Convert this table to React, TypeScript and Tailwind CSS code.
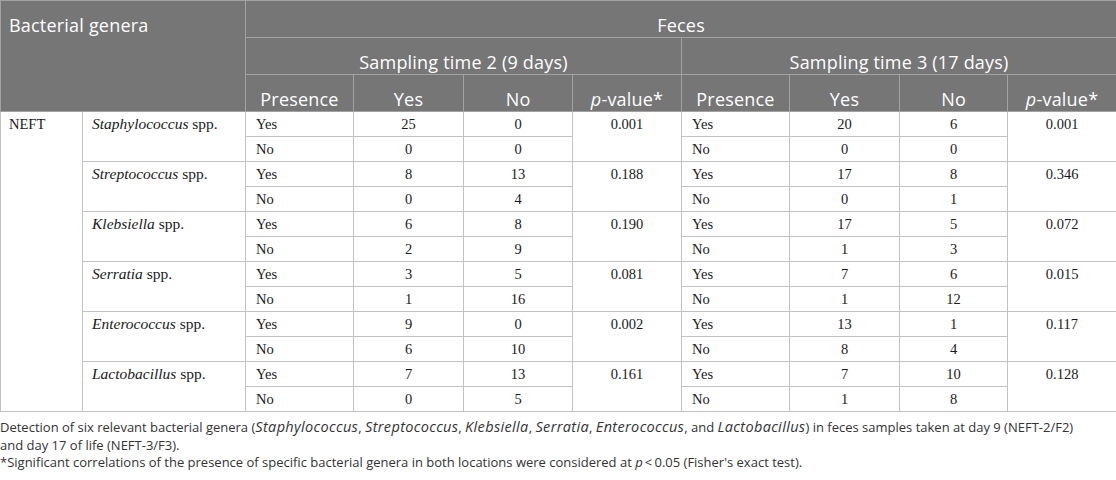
import React from "react";

type Row = { yes1: string; no1: string; yes2: string; no2: string };
type Genus = { name: string; p1: string; p2: string; rows: [Row, Row] };

const genera: Genus[] = [
  { name: "Staphylococcus", p1: "0.001", p2: "0.001", rows: [{ yes1: "25", no1: "0", yes2: "20", no2: "6" }, { yes1: "0", no1: "0", yes2: "0", no2: "0" }] },
  { name: "Streptococcus", p1: "0.188", p2: "0.346", rows: [{ yes1: "8", no1: "13", yes2: "17", no2: "8" }, { yes1: "0", no1: "4", yes2: "0", no2: "1" }] },
  { name: "Klebsiella", p1: "0.190", p2: "0.072", rows: [{ yes1: "6", no1: "8", yes2: "17", no2: "5" }, { yes1: "2", no1: "9", yes2: "1", no2: "3" }] },
  { name: "Serratia", p1: "0.081", p2: "0.015", rows: [{ yes1: "3", no1: "5", yes2: "7", no2: "6" }, { yes1: "1", no1: "16", yes2: "1", no2: "12" }] },
  { name: "Enterococcus", p1: "0.002", p2: "0.117", rows: [{ yes1: "9", no1: "0", yes2: "13", no2: "1" }, { yes1: "6", no1: "10", yes2: "8", no2: "4" }] },
  { name: "Lactobacillus", p1: "0.161", p2: "0.128", rows: [{ yes1: "7", no1: "13", yes2: "7", no2: "10" }, { yes1: "0", no1: "5", yes2: "1", no2: "8" }] },
];

const widths = [82, 163, 108, 110, 109, 109, 108, 110, 108, 109];

const th = "border border-[#a2a2a2] bg-[#767676] text-white font-normal align-top pt-[12px] h-[37px] leading-[24px]";
const td = "border border-[#c2c2c2] h-[25px] leading-[20px] align-middle";
const em = "italic text-[14.5px] tracking-[0.35px]";

export default function App() {
  return (
    <div className="w-[1116px] bg-white">
      <table
        className="w-[1116px] table-fixed border-collapse text-[18px] tracking-[0.2px]"
        style={{ fontFamily: '"Open Sans", sans-serif' }}
      >
        <colgroup>
          {widths.map((w, i) => (
            <col key={i} style={{ width: w }} />
          ))}
        </colgroup>
        <thead>
          <tr>
            <th rowSpan={3} colSpan={2} className={`${th} text-left pl-[8px]`}>
              Bacterial genera
            </th>
            <th colSpan={8} className={`${th} text-center`}>Feces</th>
          </tr>
          <tr>
            <th colSpan={4} className={`${th} text-center`}>Sampling time 2 (9 days)</th>
            <th colSpan={4} className={`${th} text-center`}>Sampling time 3 (17 days)</th>
          </tr>
          <tr>
            <th className={`${th} text-center`}>Presence</th>
            <th className={`${th} text-center`}>Yes</th>
            <th className={`${th} text-center`}>No</th>
            <th className={`${th} text-center`}><i>p</i>-value*</th>
            <th className={`${th} text-center`}>Presence</th>
            <th className={`${th} text-center`}>Yes</th>
            <th className={`${th} text-center`}>No</th>
            <th className={`${th} text-center`}><i>p</i>-value*</th>
          </tr>
        </thead>
        <tbody
          className="text-[14.5px] text-[#1a1a1a] tracking-normal"
          style={{ fontFamily: '"Liberation Serif", serif' }}
        >
          {genera.map((g, gi) =>
            g.rows.map((r, ri) => (
              <tr key={`${gi}-${ri}`}>
                {gi === 0 && ri === 0 && (
                  <td rowSpan={12} className={`${td} align-top pl-[8px] pt-[2px]`}>NEFT</td>
                )}
                {ri === 0 && (
                  <td rowSpan={2} className={`${td} align-top pl-[9px] pt-[2px] text-[15.5px]`}>
                    <i>{g.name}</i> spp.
                  </td>
                )}
                <td className={`${td} pl-[10px]`}>{ri === 0 ? "Yes" : "No"}</td>
                <td className={`${td} text-center`}>{r.yes1}</td>
                <td className={`${td} text-center`}>{r.no1}</td>
                {ri === 0 && (
                  <td rowSpan={2} className={`${td} align-top text-center pt-[2px]`}>{g.p1}</td>
                )}
                <td className={`${td} pl-[10px]`}>{ri === 0 ? "Yes" : "No"}</td>
                <td className={`${td} text-center`}>{r.yes2}</td>
                <td className={`${td} text-center`}>{r.no2}</td>
                {ri === 0 && (
                  <td rowSpan={2} className={`${td} align-top text-center pt-[2px]`}>{g.p2}</td>
                )}
              </tr>
            ))
          )}
        </tbody>
      </table>
      <div
        className="mt-[6px] text-[13px] leading-[17.5px] text-[#333333]"
        style={{ fontFamily: '"Open Sans", sans-serif' }}
      >
        <p>
          Detection of six relevant bacterial genera (<span className={em}>Staphylococcus</span>,{" "}
          <span className={em}>Streptococcus</span>, <span className={em}>Klebsiella</span>,{" "}
          <span className={em}>Serratia</span>, <span className={em}>Enterococcus</span>, and{" "}
          <span className={em}>Lactobacillus</span>) in feces samples taken at day 9 (NEFT-2/F2)
          <br />
          and day 17 of life (NEFT-3/F3).
        </p>
        <p>
          *Significant correlations of the presence of specific bacterial genera in both locations were
          considered at <i>p</i>&thinsp;&lt;&thinsp;0.05 (Fisher's exact test).
        </p>
      </div>
    </div>
  );
}
